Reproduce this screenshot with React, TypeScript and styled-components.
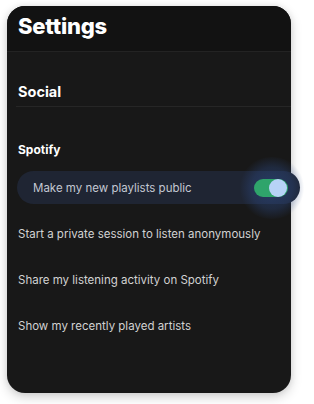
import React from "react";
import styled, { createGlobalStyle } from "styled-components";

const Global = createGlobalStyle`
  html, body { margin: 0; padding: 0; background: #ffffff; }
  body { font-family: "Inter", "Lato", sans-serif; -webkit-font-smoothing: antialiased; }
`;

const Page = styled.div`
  padding: 6px 0 0 7px;
  width: 314px;
  height: 404px;
  box-sizing: border-box;
`;

const Card = styled.div`
  width: 284px;
  height: 387px;
  border-radius: 18px;
  background: #181818;
  box-shadow: 0 4px 12px rgba(0, 0, 0, 0.18), 0 0 6px rgba(0, 0, 0, 0.08);
  display: flex;
  flex-direction: column;
  position: relative;
`;

const Header = styled.div`
  height: 46px;
  background: #121212;
  border-radius: 18px 18px 0 0;
  border-bottom: 1px solid #232323;
  padding: 8px 0 0 11px;
  box-sizing: border-box;
`;

const Title = styled.h1`
  margin: 0;
  font-size: 22px;
  line-height: 24px;
  font-weight: 800;
  color: #ffffff;
  letter-spacing: -0.2px;
`;

const Section = styled.div`
  margin: 31px 0 0 9px;
  padding: 0 0 5px 2px;
  border-bottom: 1px solid #262626;
`;

const SectionTitle = styled.h2`
  margin: 0;
  font-size: 14.5px;
  line-height: 18px;
  font-weight: 700;
  color: #ffffff;
`;

const Group = styled.div`
  margin-top: 35px;
  padding-left: 11px;
  display: flex;
  flex-direction: column;
`;

const GroupTitle = styled.h3`
  margin: 0 0 13px;
  font-size: 12px;
  line-height: 16px;
  font-weight: 700;
  color: #ffffff;
`;

const Row = styled.div<{ $active?: boolean }>`
  height: 33px;
  display: flex;
  align-items: center;
  justify-content: space-between;
  box-sizing: border-box;
  font-size: 11.5px;
  color: ${(p) => (p.$active ? "#c3c8d2" : "#d2d2d2")};
  margin-bottom: 13px;
  ${(p) =>
    p.$active &&
    `
    width: 283px;
    margin-left: -1px;
    padding: 0 12px 0 16px;
    border-radius: 17px;
    background: #1f2533;
    position: relative;
    z-index: 1;
  `}
`;

const ToggleWrap = styled.div`
  position: relative;
  width: 34px;
  height: 18px;
`;

const Glow = styled.div`
  position: absolute;
  left: -16px;
  top: -22px;
  width: 68px;
  height: 62px;
  border-radius: 50%;
  background: radial-gradient(
    circle at center,
    rgba(45, 75, 135, 0.6) 0%,
    rgba(45, 75, 135, 0.35) 45%,
    rgba(45, 75, 135, 0) 70%
  );
`;

const Track = styled.div`
  position: absolute;
  inset: 0;
  border-radius: 9px;
  background: #2fa46b;
`;

const Knob = styled.div`
  position: absolute;
  right: 1px;
  top: 0;
  width: 18px;
  height: 18px;
  border-radius: 50%;
  background: #b7d3f7;
`;

export default function App() {
  return (
    <>
      <Global />
      <Page>
        <Card>
          <Header>
            <Title>Settings</Title>
          </Header>
          <Section>
            <SectionTitle>Social</SectionTitle>
          </Section>
          <Group>
            <GroupTitle>Spotify</GroupTitle>
            <Row $active>
              <span>Make my new playlists public</span>
              <ToggleWrap>
                <Glow />
                <Track />
                <Knob />
              </ToggleWrap>
            </Row>
            <Row>Start a private session to listen anonymously</Row>
            <Row>Share my listening activity on Spotify</Row>
            <Row>Show my recently played artists</Row>
          </Group>
        </Card>
      </Page>
    </>
  );
}
